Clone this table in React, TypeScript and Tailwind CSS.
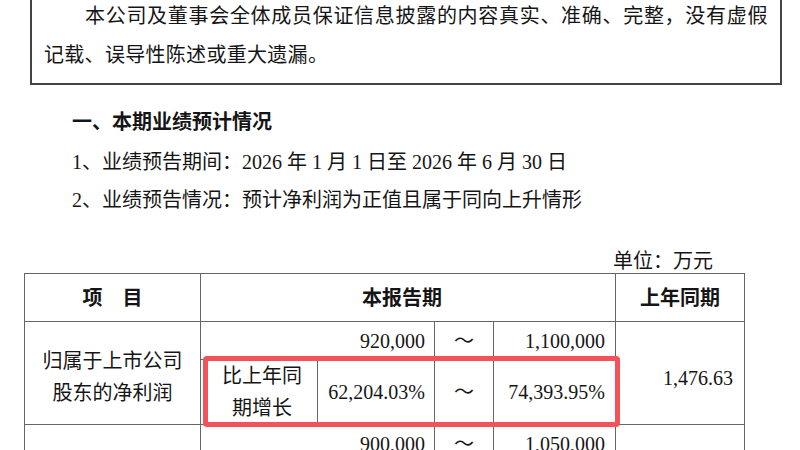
import React from "react";

const cell = "border border-[#666] p-0 align-middle";

export default function App() {
  return (
    <div className="relative h-[450px] w-[800px] overflow-hidden bg-white text-[20px] text-[#151515] font-['Liberation_Serif','Noto_Sans_CJK_SC',serif]">
      {/* statement box, top edge is out of view */}
      <div className="ml-[30px] w-[752px] border-x-2 border-b-2 border-[#444] px-[12px] pb-[12px]">
        <div className="pl-[41px] leading-[32px] tracking-[0.7px] whitespace-nowrap">
          本公司及董事会全体成员保证信息披露的内容真实、准确、完整，没有虚假
        </div>
        <div className="mt-[7px] leading-[32px] tracking-[0.3px]">记载、误导性陈述或重大遗漏。</div>
      </div>

      <div className="ml-[72px] mt-[21px] font-bold leading-[32px]">一、本期业绩预计情况</div>
      <div className="ml-[72px] mt-[8px] leading-[32px]">
        1、业绩预告期间：2026 年 1 月 1 日至 2026 年 6 月 30 日
      </div>
      <div className="ml-[72px] mt-[6px] leading-[32px]">
        2、业绩预告情况：预计净利润为正值且属于同向上升情形
      </div>

      <div className="mt-[34px] flex w-[713px] justify-end leading-[23px]">单位：万元</div>

      <div className="relative ml-[24px] w-[720px]">
        <table className="w-[720px] table-fixed border-collapse leading-[32px]">
          <colgroup>
            <col className="w-[176px]" />
            <col className="w-[117px]" />
            <col className="w-[117px]" />
            <col className="w-[59px]" />
            <col className="w-[122px]" />
            <col className="w-[129px]" />
          </colgroup>
          <tbody>
            <tr className="h-[48px] font-bold">
              <td className={`${cell} text-center`}>项　目</td>
              <td className={`${cell} text-center`} colSpan={4}>
                <span className="pr-[12px]">本报告期</span>
              </td>
              <td className={`${cell} text-center`}>上年同期</td>
            </tr>
            <tr className="h-[38px]">
              <td className={`${cell} text-center`} rowSpan={2}>
                <div className="pt-[8px]">归属于上市公司</div>
                <div>股东的净利润</div>
              </td>
              <td className={`${cell} pr-[9px] text-right`} colSpan={2}>920,000</td>
              <td className={`${cell} text-center`}>～</td>
              <td className={`${cell} pr-[10px] text-right`}>1,100,000</td>
              <td className={`${cell} pr-[11px] text-right`} rowSpan={2}>
                <div className="pt-[10px]">1,476.63</div>
              </td>
            </tr>
            <tr className="h-[64px]">
              <td className={`${cell} text-center`}>
                <div className="pl-[6px]">比上年同</div>
                <div className="pl-[6px]">期增长</div>
              </td>
              <td className={`${cell} pr-[9px] text-right`}>62,204.03%</td>
              <td className={`${cell} text-center`}>～</td>
              <td className={`${cell} pr-[10px] text-right`}>74,393.95%</td>
            </tr>
            <tr className="h-[38px]">
              <td className={cell}></td>
              <td className={`${cell} pr-[9px] text-right`} colSpan={2}>900,000</td>
              <td className={`${cell} text-center`}>～</td>
              <td className={`${cell} pr-[10px] text-right`}>1,050,000</td>
              <td className={cell}></td>
            </tr>
          </tbody>
        </table>
        {/* highlight marker drawn over the growth row */}
        <div className="pointer-events-none absolute left-[179px] top-[83px] h-[71px] w-[417px] rounded-[4px] border-[5px] border-[#f4525a]" />
      </div>
    </div>
  );
}
